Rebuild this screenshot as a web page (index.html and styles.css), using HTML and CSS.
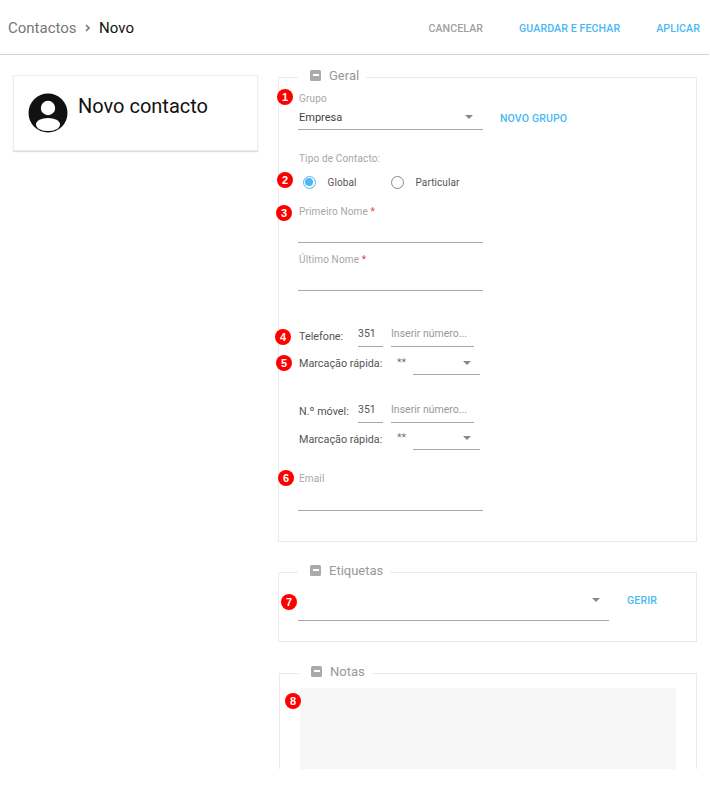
FILE: index.html
```html
<!DOCTYPE html>
<html lang="pt">
<head>
<meta charset="utf-8">
<title>Novo contacto</title>
<link rel="stylesheet" href="styles.css">
</head>
<body>
<div class="page">
  <header class="topbar">
    <nav class="crumbs">
      <span class="crumb-parent">Contactos</span>
      <svg class="crumb-sep" width="6" height="8" viewBox="0 0 6 8"><path d="M1 1l3 3-3 3" fill="none" stroke="#777" stroke-width="1.6"/></svg>
      <span class="crumb-current">Novo</span>
    </nav>
    <div class="actions">
      <span class="action action-muted">CANCELAR</span>
      <span class="action">GUARDAR E FECHAR</span>
      <span class="action">APLICAR</span>
    </div>
  </header>
  <main class="main">
    <aside class="card">
      <svg class="avatar" width="40" height="40" viewBox="0 0 40 40">
        <circle cx="20" cy="20" r="19.5" fill="#111"/>
        <circle cx="20" cy="15" r="7.2" fill="#fff"/>
        <ellipse cx="20" cy="31.5" rx="12" ry="6.6" fill="#fff"/>
      </svg>
      <h1 class="card-title">Novo contacto</h1>
    </aside>
    <div class="forms">
      <section class="panel panel-geral">
        <div class="legend"><span class="minus"></span><span>Geral</span></div>
        <span class="badge b1">1</span>
        <div class="label">Grupo</div>
        <div class="with-action">
          <div class="select select-group"><span>Empresa</span><i class="arrow"></i></div>
          <span class="link link-group">NOVO GRUPO</span>
        </div>
        <div class="label label-type">Tipo de Contacto:</div>
        <span class="badge b2">2</span>
        <div class="radios">
          <span class="option"><i class="radio radio-on"></i>Global</span>
          <span class="option"><i class="radio"></i>Particular</span>
        </div>
        <span class="badge b3">3</span>
        <div class="label label-first">Primeiro Nome <em>*</em></div>
        <div class="input"></div>
        <div class="label label-last">Último Nome <em>*</em></div>
        <div class="input"></div>
        <span class="badge b4">4</span>
        <div class="row row-phone">
          <span class="row-label">Telefone:</span><span class="code">351</span><span class="number">Inserir número...</span>
        </div>
        <span class="badge b5">5</span>
        <div class="row row-dial">
          <span class="dial-label">Marcação rápida:</span><span class="stars">**</span><div class="select select-dial"><i class="arrow"></i></div>
        </div>
        <div class="row row-mobile">
          <span class="row-label">N.º móvel:</span><span class="code">351</span><span class="number">Inserir número...</span>
        </div>
        <div class="row row-dial-2">
          <span class="dial-label">Marcação rápida:</span><span class="stars">**</span><div class="select select-dial"><i class="arrow"></i></div>
        </div>
        <span class="badge b6">6</span>
        <div class="label label-email">Email</div>
        <div class="input input-email"></div>
      </section>
      <section class="panel panel-tags">
        <div class="legend"><span class="minus"></span><span>Etiquetas</span></div>
        <span class="badge b7">7</span>
        <div class="with-action">
          <div class="select select-tags"><i class="arrow"></i></div>
          <span class="link link-tags">GERIR</span>
        </div>
      </section>
      <section class="panel panel-notes">
        <div class="legend"><span class="minus"></span><span>Notas</span></div>
        <span class="badge b8">8</span>
        <div class="notes"></div>
      </section>
    </div>
  </main>
</div>
</body>
</html>
```
FILE: styles.css
```css
* { box-sizing: border-box; }
html, body { margin: 0; padding: 0; background: #fff; }
body { font-family: Roboto, "Liberation Sans", sans-serif; color: #555; }
.page { width: 710px; height: 769px; overflow: hidden; }

.topbar { height: 55px; width: 709px; border-bottom: 1px solid #d4d4d4; display: flex; align-items: center; justify-content: space-between; padding: 0 9px 0 8px; }
.crumbs { display: flex; align-items: center; font-size: 15px; padding-top: 1px; }
.crumb-parent { color: #777; }
.crumb-sep { margin: 1px 8px 0 8.5px; }
.crumb-current { color: #111; }
.actions { display: flex; gap: 36px; padding-top: 2px; }
.action { font-size: 10.6px; font-weight: 500; color: #4ab8f5; letter-spacing: 0.1px; }
.action-muted { color: #a0a0a0; }

.main { display: flex; align-items: flex-start; gap: 20px; padding: 20px 0 0 13px; }
.card { width: 245px; height: 76px; flex: none; border: 1px solid #ececec; box-shadow: 0 1px 1px #ddd; display: flex; padding: 17px 0 0 14px; }
.avatar { flex: none; margin: 0 0 0 -0.5px; }
.card-title { margin: -2px 0 0 10.5px; font-size: 20px; line-height: 30px; font-weight: 400; color: #111; }

.forms { width: 419px; padding-top: 2px; flex: none; }
.panel { position: relative; border: 1px solid #eaeaea; padding-left: 19px; }
.legend { position: absolute; left: 19px; top: -13px; height: 20px; background: #fff; display: flex; align-items: center; gap: 8px; padding: 0 7px 0 12px; font-size: 13px; color: #999; }
.minus { width: 11px; height: 11px; background: #aaa; border-radius: 1.5px; position: relative; display: block; }
.minus::after { content: ""; position: absolute; left: 2.5px; right: 2.5px; top: 4.5px; height: 2px; background: #fff; }

.panel-geral { height: 465px; padding-top: 14px; }
.panel-tags { height: 70px; margin-top: 30px; padding-top: 14px; }
.panel-notes { height: 140px; margin: 31px 0 0 1px; padding: 14px 0 0 20px; border-bottom: 0; }

.label { font-size: 10px; height: 12px; line-height: 14px; padding-left: 1px; color: #a6a6a6; letter-spacing: 0.15px; }
.label em { font-style: normal; color: #f04040; }
.label-type { margin-top: 22px; }
.label-first { margin-top: 14px; }
.label-last { margin-top: 10px; }
.label-email { margin-top: 22px; }

.with-action { display: flex; align-items: flex-start; }
.select { display: flex; align-items: center; justify-content: space-between; border-bottom: 1px solid #a8a8a8; font-size: 11px; color: #444; }
.select-group { width: 185px; height: 26px; padding: 1px 10px 0 1px; }
.select-dial { width: 67px; height: 22px; justify-content: flex-end; padding: 0 9px 2px 0; }
.select-tags { width: 311px; height: 34px; justify-content: flex-end; padding: 0 9px 7px 0; margin-right: 18px; }
.arrow { display: block; width: 0; height: 0; border-left: 4.5px solid transparent; border-right: 4.5px solid transparent; border-top: 4.5px solid #888; }
.link { font-size: 10.5px; font-weight: 500; color: #4ab8f5; letter-spacing: 0.15px; }
.link-group { margin: 8px 0 0 17px; }
.link-tags { margin-top: 7px; }

.radios { display: flex; height: 18px; margin-top: 9px; padding-left: 4.5px; font-size: 10px; color: #555; }
.option { width: 88px; display: flex; align-items: center; gap: 12px; letter-spacing: 0.1px; }
.radio { width: 13px; height: 13px; border: 1.5px solid #888; border-radius: 50%; display: block; flex: none; position: relative; }
.radio-on { border-color: #4ab8f5; }
.radio-on::after { content: ""; position: absolute; inset: 1.5px; border-radius: 50%; background: #4ab8f5; }

.input { width: 185px; height: 26px; border-bottom: 1px solid #a8a8a8; }
.input-email { height: 27px; }

.row { display: flex; height: 22px; font-size: 10.8px; color: #555; }
.row-phone { margin-top: 34px; }
.row-dial { margin-top: 6px; }
.row-mobile { margin-top: 26px; }
.row-dial-2 { margin-top: 5px; }
.row-label { width: 60px; padding: 4px 0 0 1px; line-height: 15px; }
.row-mobile .row-label { padding-top: 3px; }
.code { width: 25px; margin-right: 8px; border-bottom: 1px solid #a8a8a8; line-height: 18px; color: #555; font-size: 10.5px; }
.number { width: 83px; border-bottom: 1px solid #a8a8a8; line-height: 18px; color: #999; font-size: 10.5px; white-space: nowrap; overflow: hidden; }
.dial-label { width: 99px; padding: 3px 0 0 1px; line-height: 15px; }
.row-dial-2 .dial-label { padding-top: 4px; }
.stars { width: 16px; padding-top: 3px; line-height: 14px; color: #555; font-weight: 300; }

.notes { width: 376px; height: 120px; background: #f6f6f6; }

.badge { position: absolute; width: 16px; height: 16px; border-radius: 50%; background: #f00; color: #fff; font-size: 11px; font-weight: 700; line-height: 16px; text-align: center; font-family: "Liberation Sans", sans-serif; }
.b1 { left: -2px; top: 11px; }
.b2 { left: -2px; top: 94px; }
.b3 { left: -3px; top: 127px; }
.b4 { left: -4px; top: 251px; }
.b5 { left: -3px; top: 277px; }
.b6 { left: -1px; top: 392px; }
.b7 { left: 2px; top: 21px; }
.b8 { left: 5px; top: 19px; }
```
